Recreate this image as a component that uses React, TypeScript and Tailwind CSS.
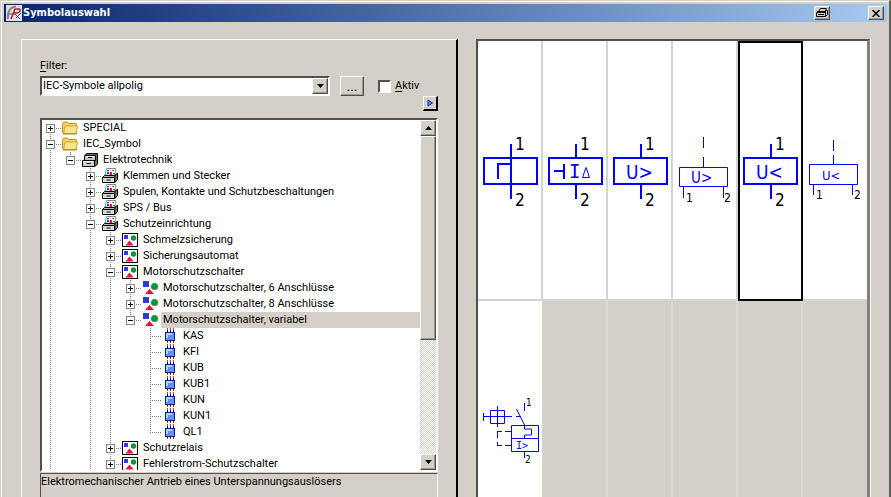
import type { ReactNode } from "react";
import clsx from "clsx";

// ---------------------------------------------------------------------------
// Data
// ---------------------------------------------------------------------------

type IconName = "folder" | "cabinet" | "drawer" | "group" | "shapes" | "chip";

interface TreeRow {
  label: string;
  icon: IconName;
  /** One character per ancestor column: "|" draws a guide line, "." leaves it empty. */
  guides: string;
  state?: "open" | "closed";
  first?: boolean;
  last?: boolean;
  selected?: boolean;
}

const ROWS: TreeRow[] = [
  { label: "SPECIAL", icon: "folder", guides: "", state: "closed", first: true },
  { label: "IEC_Symbol", icon: "folder", guides: "", state: "open" },
  { label: "Elektrotechnik", icon: "cabinet", guides: "|", state: "open", last: true },
  { label: "Klemmen und Stecker", icon: "drawer", guides: "|.", state: "closed" },
  { label: "Spulen, Kontakte und Schutzbeschaltungen", icon: "drawer", guides: "|.", state: "closed" },
  { label: "SPS / Bus", icon: "drawer", guides: "|.", state: "closed" },
  { label: "Schutzeinrichtung", icon: "drawer", guides: "|.", state: "open" },
  { label: "Schmelzsicherung", icon: "group", guides: "|.|", state: "closed" },
  { label: "Sicherungsautomat", icon: "group", guides: "|.|", state: "closed" },
  { label: "Motorschutzschalter", icon: "group", guides: "|.|", state: "open" },
  { label: "Motorschutzschalter, 6 Anschlüsse", icon: "shapes", guides: "|.||", state: "closed" },
  { label: "Motorschutzschalter, 8 Anschlüsse", icon: "shapes", guides: "|.||", state: "closed" },
  { label: "Motorschutzschalter, variabel", icon: "shapes", guides: "|.||", state: "open", last: true, selected: true },
  { label: "KAS", icon: "chip", guides: "|.||." },
  { label: "KFI", icon: "chip", guides: "|.||." },
  { label: "KUB", icon: "chip", guides: "|.||." },
  { label: "KUB1", icon: "chip", guides: "|.||." },
  { label: "KUN", icon: "chip", guides: "|.||." },
  { label: "KUN1", icon: "chip", guides: "|.||." },
  { label: "QL1", icon: "chip", guides: "|.||.", last: true },
  { label: "Schutzrelais", icon: "group", guides: "|.|", state: "closed" },
  { label: "Fehlerstrom-Schutzschalter", icon: "group", guides: "|.|", state: "closed" },
];

const RAISED =
  "border border-t-white border-l-white border-r-[#505050] border-b-[#505050] bg-[#d4d0c8] shadow-[inset_-1px_-1px_0_#9a978f]";
const SUNKEN =
  "border-2 border-t-[#505050] border-l-[#505050] border-r-white border-b-white";

// ---------------------------------------------------------------------------
// Tree icons
// ---------------------------------------------------------------------------

function TreeIcon({ name }: { name: IconName }) {
  return (
    <svg width="16" height="16" viewBox="0 0 16 16" className="shrink-0" aria-hidden>
      {name === "folder" && (
        <>
          <path d="M.5 13V3.5l1-1.5h4l1.5 1.5h7.5V13z" fill="#f3cf5e" stroke="#c39a2c" />
          <path d="M1.5 13.5 3 6h12.5L14 13.5z" fill="#fde68a" stroke="#d3a93a" />
          <path d="M1 14h14" stroke="#a87f1c" />
        </>
      )}
      {name === "cabinet" && (
        <>
          <path d="M3.5 2.5 5 1.5h10.5V12L13 14.5z" fill="#6a6a6a" stroke="#000" />
          <path d="M2.5 3.5h11v5h-11z" fill="#c4c4c4" stroke="#000" />
          <path d="M.5 8.5h12v6H.5z" fill="#d0d0d0" stroke="#000" />
          <path d="M6 5.5h4M4.5 11.5h4" stroke="#000" />
          <path d="M4 4.5h8M1.5 9.5h10" stroke="#fff" />
        </>
      )}
      {name === "drawer" && (
        <>
          <path d="M4.500 .5h9L13 7H3z" fill="#fff" stroke="#888" />
          <path d="M5 2h2v1H5zM5 4h2v2H5z" fill="#2f3cd6" />
          <path d="M8 4h2v3H8z" fill="#f00f3c" />
          <path d="M10 2h2v1h-2zM11 5h2v1h-2z" fill="#12963a" />
          <path d="m12.5 8 3-3v6.5L13 14.5z" fill="#777" stroke="#000" />
          <path d="M2.5 7.5h11l-1 2H.5z" fill="#b5b5b5" stroke="#000" />
          <path d="M.5 9.5h12v5H.5z" fill="#dcdcdc" stroke="#000" />
          <path d="M4.5 12h4" stroke="#000" />
        </>
      )}
      {name === "group" && (
        <>
          <rect x=".5" y="1.5" width="15" height="13" fill="#fff" stroke="#000" />
          <rect x="2" y="3" width="4" height="4" fill="#2f3cd6" />
          <circle cx="11.5" cy="6" r="2.7" fill="#12963a" />
          <path d="M7.5 8.5 11.5 13.5h-8z" fill="#f00f3c" />
        </>
      )}
      {name === "shapes" && (
        <>
          <rect x="1" y="1" width="6" height="6" fill="#2f3cd6" />
          <circle cx="12.5" cy="6.5" r="3.5" fill="#12963a" />
          <path d="M7.5 9 12 14H3z" fill="#f00f3c" />
        </>
      )}
      {name === "chip" && (
        <>
          <path d="M5.5 2v2M8.5 2v2M11.5 2v2M5.5 13v1M8.5 13v1M11.5 13v1" stroke="#111" />
          <path d="M5.5 0v2M8.5 0v2M11.5 0v2M5.5 14v1M8.5 14v1M11.5 14v1" stroke="#e03020" />
          <rect x="3.5" y="4.5" width="9" height="8" fill="#5f92f2" stroke="#0a1e8c" />
          <path d="M5 10V6h5" stroke="#b4d2ff" strokeWidth="2" fill="none" />
        </>
      )}
    </svg>
  );
}

// ---------------------------------------------------------------------------
// Tree
// ---------------------------------------------------------------------------

function Branch({ row }: { row: TreeRow }) {
  return (
    <svg width="20" height="16" viewBox="0 0 20 16" className="block" aria-hidden>
      <g stroke="#808080" strokeDasharray="1 1">
        {!row.first && <path d="M8.5 0v8" />}
        {!row.last && <path d="M8.5 8v8" />}
        <path d="M8 8.5h11" />
      </g>
      {row.state && (
        <>
          <rect x="4.5" y="4.5" width="8" height="8" fill="#fff" stroke="#848484" />
          <path d="M6 8.5h5" stroke="#000" />
          {row.state === "closed" && <path d="M8.5 6v5" stroke="#000" />}
        </>
      )}
    </svg>
  );
}

function TreeItem({ row }: { row: TreeRow }) {
  return (
    <li
      role="treeitem"
      aria-level={row.guides.length + 1}
      aria-expanded={row.state ? row.state === "open" : undefined}
      aria-selected={!!row.selected}
      className="flex h-4 items-center"
    >
      {row.guides.split("").map((guide, idx) => (
        <svg key={idx} width="20" height="16" className="shrink-0" aria-hidden>
          {guide === "|" && <path d="M8.5 0v16" stroke="#808080" strokeDasharray="1 1" />}
        </svg>
      ))}
      {row.state ? (
        <button type="button" aria-label={`${row.label} umschalten`} className="shrink-0">
          <Branch row={row} />
        </button>
      ) : (
        <span className="shrink-0">
          <Branch row={row} />
        </span>
      )}
      <TreeIcon name={row.icon} />
      <span
        className={clsx(
          "ml-[3px] flex-1 pl-0.5 whitespace-nowrap",
          row.selected && "bg-[#d4d0c8]",
        )}
      >
        {row.label}
      </span>
    </li>
  );
}

function ScrollBar() {
  return (
    <div className="flex w-4 shrink-0 flex-col bg-[repeating-conic-gradient(#d4d0c8_0_25%,#fff_0_50%)] bg-[length:2px_2px]">
      <button type="button" aria-label="Nach oben" className={clsx("flex h-4 items-center justify-center", RAISED)}>
        <svg width="7" height="4" aria-hidden>
          <path d="M3.5 0 7 4H0z" />
        </svg>
      </button>
      <div className={clsx("h-[204px]", RAISED)} />
      <button type="button" aria-label="Nach unten" className={clsx("mt-auto flex h-4 items-center justify-center", RAISED)}>
        <svg width="7" height="4" aria-hidden>
          <path d="M0 0h7L3.5 4z" />
        </svg>
      </button>
    </div>
  );
}

// ---------------------------------------------------------------------------
// Circuit symbols
// ---------------------------------------------------------------------------

function Pin({ x, y, size, children }: { x: number; y: number; size: number; children: string }) {
  return (
    <text x={x} y={y} fontSize={size} fill="#000" stroke="none">
      {children}
    </text>
  );
}

/** Trip coil with a stem above and below the box. */
function Coil({ children }: { children: ReactNode }) {
  return (
    <g strokeWidth="2">
      <path d="M6 117h53v26H6zM33 103v14M33 143v15" />
      {children}
      <Pin x={37} y={109} size={17}>1</Pin>
      <Pin x={37} y={165} size={17}>2</Pin>
    </g>
  );
}

function Glyphs({ x, y, size, mono, children }: { x: number; y: number; size: number; mono?: boolean; children: string }) {
  return (
    <text
      x={x}
      y={y}
      fontSize={size}
      fill="#00f"
      stroke="none"
      className={mono ? "font-['DejaVu_Sans_Mono',monospace]" : undefined}
    >
      {children}
    </text>
  );
}

const SYMBOLS: { name: string; art: ReactNode; selected?: boolean }[] = [
  {
    name: "Thermischer Auslöser",
    art: (
      <Coil>
        <path d="M33 117v26M20 138v-15h13" />
      </Coil>
    ),
  },
  {
    name: "Fehlerstromauslöser",
    art: (
      <Coil>
        <path d="M11 130h10M21 123v15" />
        <Glyphs x={26} y={137} size={19} mono>I</Glyphs>
        <path d="M43 126.5 46.5 136.5h-7z" strokeWidth="1" />
      </Coil>
    ),
  },
  {
    name: "Überspannungsauslöser",
    art: (
      <Coil>
        <Glyphs x={18} y={138} size={19}>{"U>"}</Glyphs>
      </Coil>
    ),
  },
  {
    name: "Überspannungsauslöser, seitlich",
    art: (
      <g>
        <path d="M6.5 126.5h48v19h-48zM30.5 96v11M30.5 116v10M10.5 146v11M50.5 146v11" />
        <Glyphs x={18} y={142} size={15}>{"U>"}</Glyphs>
        <Pin x={13} y={161} size={12}>1</Pin>
        <Pin x={51} y={161} size={12}>2</Pin>
      </g>
    ),
  },
  {
    name: "Unterspannungsauslöser",
    selected: true,
    art: (
      <Coil>
        <Glyphs x={18} y={138} size={19}>{"U<"}</Glyphs>
      </Coil>
    ),
  },
  {
    name: "Unterspannungsauslöser, seitlich",
    art: (
      <g>
        <path d="M6.5 123.5h48v20h-48zM30.5 99v11M30.5 114v9M10.5 144v10M49.5 144v10" />
        <Glyphs x={19} y={139} size={13}>{"U<"}</Glyphs>
        <Pin x={13} y={158} size={12}>1</Pin>
        <Pin x={51} y={158} size={12}>2</Pin>
      </g>
    ),
  },
  {
    name: "Motorschutzschalter",
    art: (
      <g>
        <path d="M12.5 109.5h14v13h-14zM5 115.5h29M19.5 105v21M5.5 112v8" />
        <path d="M19.5 130v7M19.5 141v4M19 130.5h5M27 130.5h6M19 144.5h5M27 144.5h6" />
        <path d="M33.5 124.5h27v26h-27zM33.5 137.5h27M46.5 124v4h7v6h-7v4" />
        <path d="M46.5 124l-8-16M46.5 102v8M38 115.5h5M46.5 151v6" />
        <Glyphs x={38} y={148} size={10} mono>{"I>"}</Glyphs>
        <Pin x={48} y={105} size={10}>1</Pin>
        <Pin x={47} y={162} size={10}>2</Pin>
      </g>
    ),
  },
];

function SymbolGrid() {
  return (
    <div className="grid grid-cols-[repeat(5,65fr)_64fr] grid-rows-[260px_1fr] overflow-hidden border-t-2 border-r-[3px] border-l-2 border-t-[#505050] border-r-[#808080] border-l-[#505050] font-['DejaVu_Sans_Condensed','DejaVu_Sans',sans-serif] shadow-[1px_0_0_#fff]">
      {SYMBOLS.map((symbol, idx) => (
        <button
          key={symbol.name}
          type="button"
          aria-label={symbol.name}
          aria-pressed={!!symbol.selected}
          className={clsx(
            "flex overflow-hidden bg-white",
            symbol.selected && "outline-2 -outline-offset-2 outline-black",
            !symbol.selected && idx < 5 && "border-r-2 border-[#d4d4d4]",
            !symbol.selected && idx < 6 && "border-b-2 border-[#d4d4d4]",
            idx === 6 && "border-r border-[#d4d4d4]",
          )}
        >
          <svg width="65" height="195" viewBox="0 0 65 195" fill="none" stroke="#00f" className="shrink-0" aria-hidden>
            {symbol.art}
          </svg>
        </button>
      ))}
      {[1, 2, 3, 4].map((slot) => (
        <div key={slot} className="border-r-2 border-[#dcdad5]" />
      ))}
    </div>
  );
}

// ---------------------------------------------------------------------------
// Window
// ---------------------------------------------------------------------------

function TitleBar() {
  return (
    <header className="flex h-[18px] items-center bg-linear-to-r from-[#0a246a] to-[#a6caf0] pr-[3px] pl-0.5">
      <svg width="16" height="16" viewBox="0 0 16 16" aria-hidden>
        <rect width="16" height="16" fill="#dedede" />
        <path d="M2 14C1 7 4 2 10 1.5" stroke="#888" strokeWidth="2" fill="none" />
        <path d="M5 14 9 4h4c2 0 1 4-2 4H8" stroke="#c01830" strokeWidth="1.5" fill="none" />
        <path d="M2 9h7l5 5M10 13l5-5" stroke="#555" fill="none" />
      </svg>
      <h1 className="ml-px flex-1 font-['DejaVu_Sans_Condensed','DejaVu_Sans',sans-serif] font-bold text-white">
        Symbolauswahl
      </h1>
      <button type="button" aria-label="Drucken" className={clsx("flex h-[14px] w-4 items-center justify-center", RAISED)}>
        <svg width="12" height="10" viewBox="0 0 12 10" fill="none" stroke="#000" aria-hidden>
          <path d="M2.5 3.5 4.5.5h6L9 3.5M.5 4.5h9v4h-9zM9.5 8.5l2-2v-4h-1M1 3.5h9M2 6.5h6" />
        </svg>
      </button>
      <button type="button" aria-label="Schließen" className={clsx("ml-[38px] flex h-[14px] w-4 items-center justify-center", RAISED)}>
        <svg width="8" height="7" viewBox="0 0 8 7" stroke="#000" strokeWidth="1.5" aria-hidden>
          <path d="M.5 0l7 7M7.5 0l-7 7" />
        </svg>
      </button>
    </header>
  );
}

function FilterBar() {
  return (
    <div>
      <label htmlFor="filter" className="mb-0.5 block">
        <u className="underline-offset-2">F</u>ilter:
      </label>
      <div className="flex h-5 items-center">
        <div className="relative h-full flex-1">
          <select id="filter" className={clsx("h-full w-full appearance-none bg-white pl-px leading-4", SUNKEN)}>
            <option>IEC-Symbole allpolig</option>
          </select>
          <span className={clsx("pointer-events-none absolute top-0.5 right-0.5 bottom-0.5 flex w-4 items-center justify-center", RAISED)}>
            <svg width="7" height="4" aria-hidden>
              <path d="M0 0h7L3.5 4z" />
            </svg>
          </span>
        </div>
        <button type="button" className={clsx("ml-2.5 h-full w-6 text-[14px] leading-4", RAISED)}>
          ...
        </button>
        <div className="ml-3.5 flex w-[60px] items-center gap-1">
          <input id="aktiv" type="checkbox" className={clsx("size-[13px] appearance-none bg-white", SUNKEN)} />
          <label htmlFor="aktiv">
            <u className="underline-offset-2">A</u>ktiv
          </label>
        </div>
      </div>
      <div className="flex justify-end">
        <button
          type="button"
          aria-label="Weiter"
          className="flex h-[15px] w-[15px] items-center justify-center border-t border-r-2 border-b-2 border-l border-t-white border-r-black border-b-black border-l-white"
        >
          <svg width="7" height="8" viewBox="0 0 7 8" aria-hidden>
            <path d="M1 1 5.5 4 1 7z" fill="#2aa5ff" stroke="#0a1ea0" />
          </svg>
        </button>
      </div>
    </div>
  );
}

export default function App() {
  return (
    <div className="flex h-screen flex-col overflow-hidden border-t border-r-2 border-l border-t-[#d4d0c8] border-r-[#606060] border-l-[#d4d0c8] bg-[#d4d0c8] font-[Roboto,sans-serif] text-[11px] leading-4 text-black">
      <div className="flex min-h-0 flex-1 flex-col border-t border-l border-white px-0.5 pt-0.5">
        <TitleBar />
        <main className="grid min-h-0 flex-1 grid-cols-[437fr_394fr] gap-[18px] px-[17px] pt-[17px]">
          <section className="flex min-h-0 flex-col border-t border-r-2 border-l border-t-white border-r-black border-l-white px-[18px] pt-[18px]">
            <FilterBar />
            <div className={clsx("mt-[7px] flex min-h-0 flex-1 overflow-hidden bg-white", SUNKEN)}>
              <ul role="tree" aria-label="Symbole" className="min-w-0 flex-1 overflow-hidden">
                {ROWS.map((row) => (
                  <TreeItem key={row.label} row={row} />
                ))}
              </ul>
              <ScrollBar />
            </div>
            <p className="mt-px h-6 border-t border-r border-l border-t-[#505050] border-r-white border-l-[#505050] whitespace-nowrap">
              Elektromechanischer Antrieb eines Unterspannungsauslösers
            </p>
          </section>
          <SymbolGrid />
        </main>
      </div>
    </div>
  );
}
